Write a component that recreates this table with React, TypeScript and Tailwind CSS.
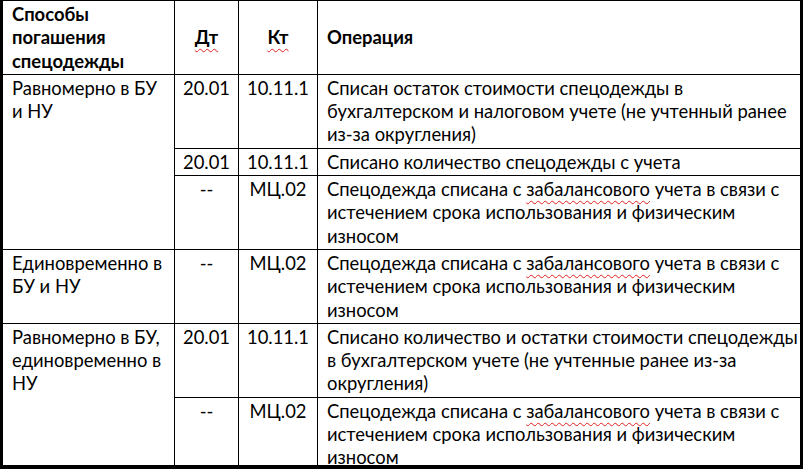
import React from 'react';

const cell = 'border-r border-b border-black px-[9px] pt-[2px] pb-[1px] align-top whitespace-nowrap';
const code = 'border-r border-b border-black px-[4px] pt-[2px] pb-[1px] align-top text-center whitespace-nowrap';
const op = 'border-b border-black px-[9px] pt-[2px] pb-[1px] align-top whitespace-nowrap';

function Typo({ children }: { children: React.ReactNode }) {
  return (
    <span className="underline decoration-wavy decoration-[#e0201e] decoration-1 underline-offset-[4px]">
      {children}
    </span>
  );
}

const offBalance = (
  <>
    Спецодежда списана с <Typo>забалансового</Typo> учета в связи с
    <br />
    истечением срока использования и физическим
    <br />
    износом
  </>
);

export default function App() {
  return (
    <div className="w-[803px] h-[470px] bg-white">
      <div className="h-[469px] border-l-[3px] border-t border-r-[3px] border-b-[4px] border-black overflow-hidden">
        <table className="w-full table-fixed border-separate border-spacing-0 text-black text-[18.4px] leading-[23.3px] font-['Lato',sans-serif]">
          <colgroup>
            <col className="w-[172px]" />
            <col className="w-[64px]" />
            <col className="w-[79px]" />
            <col />
          </colgroup>
          <thead>
            <tr className="font-bold">
              <th className={cell + ' text-left'}>
                Способы
                <br />
                погашения
                <br />
                спецодежды
              </th>
              <th className={code + ' !align-middle'}>
                <Typo>Дт</Typo>
              </th>
              <th className={code + ' !align-middle'}>
                <Typo>Кт</Typo>
              </th>
              <th className={op + ' text-left !align-middle'}>Операция</th>
            </tr>
          </thead>
          <tbody>
            <tr>
              <td rowSpan={3} className={cell}>
                Равномерно в БУ
                <br />
                и НУ
              </td>
              <td className={code}>20.01</td>
              <td className={code}>10.11.1</td>
              <td className={op}>
                Списан остаток стоимости спецодежды в
                <br />
                бухгалтерском и налоговом учете (не учтенный ранее
                <br />
                из-за округления)
              </td>
            </tr>
            <tr>
              <td className={code}>20.01</td>
              <td className={code}>10.11.1</td>
              <td className={op}>Списано количество спецодежды с учета</td>
            </tr>
            <tr>
              <td className={code}>--</td>
              <td className={code}>МЦ.02</td>
              <td className={op}>{offBalance}</td>
            </tr>
            <tr>
              <td className={cell}>
                Единовременно в
                <br />
                БУ и НУ
              </td>
              <td className={code}>--</td>
              <td className={code}>МЦ.02</td>
              <td className={op}>{offBalance}</td>
            </tr>
            <tr>
              <td rowSpan={2} className={cell}>
                Равномерно в БУ,
                <br />
                единовременно в
                <br />
                НУ
              </td>
              <td className={code}>20.01</td>
              <td className={code}>10.11.1</td>
              <td className={op}>
                Списано количество и остатки стоимости спецодежды
                <br />в бухгалтерском учете (не учтенные ранее из-за
                <br />
                округления)
              </td>
            </tr>
            <tr>
              <td className={code}>--</td>
              <td className={code}>МЦ.02</td>
              <td className={op}>{offBalance}</td>
            </tr>
          </tbody>
        </table>
      </div>
    </div>
  );
}
